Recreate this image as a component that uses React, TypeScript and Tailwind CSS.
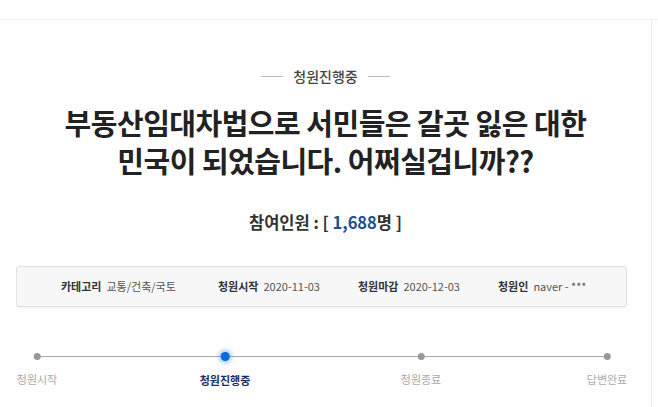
import React from 'react';

const steps = [
  { label: '청원시작', active: false, x: 37 },
  { label: '청원진행중', active: true, x: 225 },
  { label: '청원종료', active: false, x: 421 },
  { label: '답변완료', active: false, x: 607 },
];

const info = [
  { k: '카테고리', v: '교통/건축/국토', w: 'w-[157px]' },
  { k: '청원시작', v: '2020-11-03', w: 'w-[140px]' },
  { k: '청원마감', v: '2020-12-03', w: 'w-[140px]' },
  { k: '청원인', v: 'naver - ***', w: '' },
];

export default function App() {
  return (
    <div
      className="w-[658px] h-[407px] overflow-hidden bg-white text-[#333]"
      style={{ fontFamily: '"Noto Sans CJK KR", "Noto Sans", sans-serif' }}
    >
      <div className="h-[20px] border-b border-[#ececec]" />
      <div className="flex">
        <div className="w-[652px] border-r border-[#ececec] h-[387px] bg-[#fefefe]">
          {/* status */}
          <div className="flex items-center justify-center gap-[10px] pt-[46px]">
            <span className="w-[22px] h-px bg-[#bbb]" />
            <span className="text-[14px] leading-[20px] font-medium text-[#444]">청원진행중</span>
            <span className="w-[22px] h-px bg-[#bbb]" />
          </div>

          {/* title */}
          <h1 className="mt-[17px] text-center text-[29px] leading-[38px] font-bold text-[#222] tracking-[-0.5px]">
            부동산임대차법으로 서민들은 갈곳 잃은 대한
            <br />
            민국이 되었습니다. 어쩌실겁니까??
          </h1>

          {/* count */}
          <div className="mt-[31px] text-center text-[16.5px] leading-[24px] font-bold text-[#333]">
            참여인원 : [ <span className="text-[#1d4f91]">1,688</span>명 ]
          </div>

          {/* info box */}
          <div className="mx-[16px] mt-[32px] h-[41px] w-[611px] rounded-[3px] border border-[#e0e0e0] bg-[#f7f7f7] shadow-[0_1px_1px_rgba(0,0,0,0.04)] flex items-center pl-[44px] text-[11px]">
            {info.map((it, i) => (
              <div key={i} className={`flex items-center gap-[5px] ${it.w}`}>
                <span className="font-bold text-[#333]">{it.k}</span>
                <span className="text-[#555]">{it.v}</span>
              </div>
            ))}
          </div>

          {/* progress */}
          <div className="relative mt-[44px] h-[60px]">
            <div className="absolute left-[37px] w-[570px] top-[5px] h-px bg-[#a9a9a9]" />
            {steps.map((s, i) => (
              <div
                key={i}
                className="absolute top-0 flex flex-col items-center -translate-x-1/2"
                style={{ left: s.x }}
              >
                {s.active ? (
                  <span className="w-[9px] h-[9px] mt-[1px] rounded-full bg-[#0b6ad4] shadow-[0_0_4px_2px_rgba(40,130,240,0.45)]" />
                ) : (
                  <span className="w-[7px] h-[7px] mt-[2px] rounded-full bg-[#999]" />
                )}
                <span
                  className={`mt-[12px] whitespace-nowrap text-[11px] leading-[14px] ${
                    s.active ? 'font-bold text-[#1a2f5a]' : 'text-[#aaa]'
                  }`}
                >
                  {s.label}
                </span>
              </div>
            ))}
          </div>
        </div>
      </div>
    </div>
  );
}
